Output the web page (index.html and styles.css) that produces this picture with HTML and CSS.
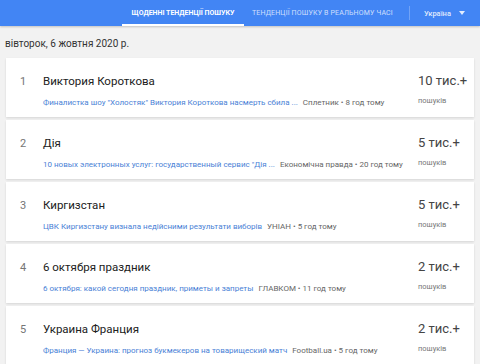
FILE: index.html
```html
<!DOCTYPE html>
<html lang="uk">
<head>
  <meta charset="UTF-8">
  <title>Тенденції пошуку</title>
  <link rel="stylesheet" href="styles.css">
</head>
<body>

  <div class="shapka">
    <div class="vkladka aktyvna">Щоденні тенденції пошуку</div>
    <div class="vkladka">Тенденції пошуку в реальному часі</div>
    <div class="rozdil"></div>
    <div class="krayina">Україна <span class="strilka"></span></div>
  </div>

  <div class="data">вівторок, 6 жовтня 2020 р.</div>

  <div class="spysok">
    <div class="kartka">
      <div class="nomer">1</div>
      <div class="zmist">
        <div class="nazva">Виктория Короткова</div>
        <div class="opys"><span class="posylannia">Финалистка шоу "Холостяк" Виктория Короткова насмерть сбила ...</span> <span class="dzherelo">Сплетник • 8 год тому</span></div>
      </div>
      <div class="kilkist">
        <div class="chyslo">10 тис.+</div>
        <div class="pidpys">пошуків</div>
      </div>
    </div>

    <div class="kartka">
      <div class="nomer">2</div>
      <div class="zmist">
        <div class="nazva">Дія</div>
        <div class="opys"><span class="posylannia">10 новых электронных услуг: государственный сервис "Дія ...</span> <span class="dzherelo">Економічна правда • 20 год тому</span></div>
      </div>
      <div class="kilkist">
        <div class="chyslo">5 тис.+</div>
        <div class="pidpys">пошуків</div>
      </div>
    </div>

    <div class="kartka">
      <div class="nomer">3</div>
      <div class="zmist">
        <div class="nazva">Киргизстан</div>
        <div class="opys"><span class="posylannia">ЦВК Киргизстану визнала недійсними результати виборів</span> <span class="dzherelo">УНІАН • 5 год тому</span></div>
      </div>
      <div class="kilkist">
        <div class="chyslo">5 тис.+</div>
        <div class="pidpys">пошуків</div>
      </div>
    </div>

    <div class="kartka">
      <div class="nomer">4</div>
      <div class="zmist">
        <div class="nazva">6 октября праздник</div>
        <div class="opys"><span class="posylannia">6 октября: какой сегодня праздник, приметы и запреты</span> <span class="dzherelo">ГЛАВКОМ • 11 год тому</span></div>
      </div>
      <div class="kilkist">
        <div class="chyslo">2 тис.+</div>
        <div class="pidpys">пошуків</div>
      </div>
    </div>

    <div class="kartka">
      <div class="nomer">5</div>
      <div class="zmist">
        <div class="nazva">Украина Франция</div>
        <div class="opys"><span class="posylannia">Франция — Украина: прогноз букмекеров на товарищеский матч</span> <span class="dzherelo">Football.ua • 5 год тому</span></div>
      </div>
      <div class="kilkist">
        <div class="chyslo">2 тис.+</div>
        <div class="pidpys">пошуків</div>
      </div>
    </div>
  </div>

</body>
</html>
```

FILE: styles.css
```css
body {
  margin: 0;
  font-family: Roboto, "Noto Sans", Arial, sans-serif;
  background-color: #f2f2f2;
  color: #212121;
}

.shapka {
  display: flex;
  align-items: stretch;
  height: 26px;
  padding-left: 122px;
  background-color: #4285f4;
  box-shadow: 0 1px 2px rgba(0, 0, 0, 0.2);
  white-space: nowrap;
}

.shapka > div {
  flex-shrink: 0;
}

.vkladka {
  display: flex;
  align-items: center;
  padding: 0 8px;
  font-size: 7px;
  letter-spacing: 0.15px;
  font-weight: 400;
  text-transform: uppercase;
  color: rgba(255, 255, 255, 0.75);
  box-sizing: border-box;
}

.vkladka.aktyvna {
  width: 122px;
  justify-content: center;
  letter-spacing: 0;
  color: #fff;
  font-weight: 700;
  border-bottom: 2px solid #fff;
  padding-top: 2px;
}

.rozdil {
  width: 1px;
  margin: 6px 14px 6px 8px;
  background-color: rgba(255, 255, 255, 0.25);
}

.krayina {
  display: flex;
  align-items: center;
  font-size: 7.5px;
  font-weight: 500;
  color: rgba(255, 255, 255, 0.85);
}

.strilka {
  width: 0;
  height: 0;
  margin-left: 8px;
  border-left: 3px solid transparent;
  border-right: 3px solid transparent;
  border-top: 4px solid rgba(255, 255, 255, 0.85);
}

.data {
  padding: 12px 5px 0;
  height: 18px;
  font-size: 10px;
  color: #333;
}

.spysok {
  margin: 2px 6px 0;
}

.kartka {
  display: flex;
  height: 59px;
  margin-bottom: 3px;
  background-color: #fff;
  box-shadow: 0 1px 2px rgba(0, 0, 0, 0.12);
}

.nomer {
  width: 34px;
  padding-top: 17px;
  text-align: center;
  font-size: 11px;
  color: #757575;
}

.zmist {
  flex: 1;
  min-width: 0;
  padding-top: 16px;
  padding-left: 3px;
}

.nazva {
  font-size: 11.5px;
  color: #212121;
}

.opys {
  margin-top: 10px;
  font-size: 8px;
  white-space: nowrap;
}

.posylannia {
  color: #4a7fd6;
}

.dzherelo {
  margin-left: 3px;
  color: #666;
}

.kilkist {
  width: 56px;
  padding-top: 15px;
  white-space: nowrap;
}

.chyslo {
  font-size: 13px;
  color: #444;
}

.pidpys {
  margin-top: 8px;
  font-size: 7.5px;
  color: #777;
}
```
